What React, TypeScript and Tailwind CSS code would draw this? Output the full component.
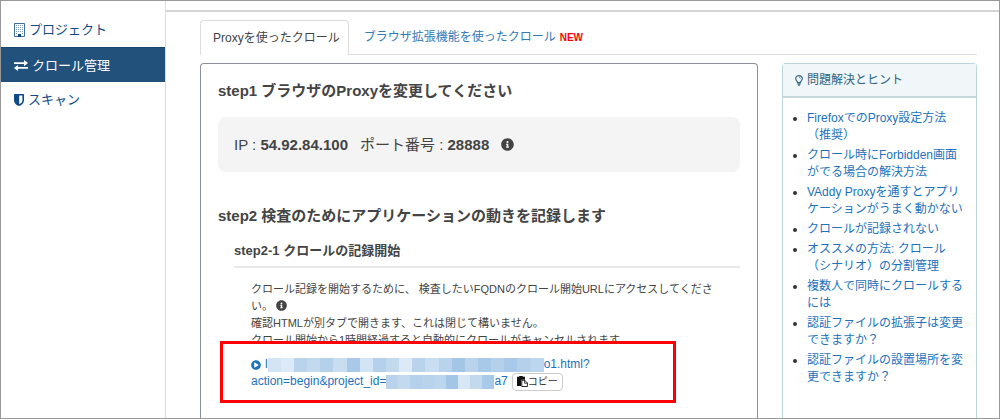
import type { ReactNode } from "react";
import { FaInfoCircle, FaPlayCircle } from "react-icons/fa";

const HINTS = [
  "FirefoxでのProxy設定方法（推奨）",
  "クロール時にForbidden画面がでる場合の解決方法",
  "VAddy Proxyを通すとアプリケーションがうまく動かない",
  "クロールが記録されない",
  "オススメの方法: クロール（シナリオ）の分割管理",
  "複数人で同時にクロールするには",
  "認証ファイルの拡張子は変更できますか？",
  "認証ファイルの設置場所を変更できますか？",
];

const MASK_HOST = [
  "bg-[#d3e4f4]",
  "bg-[#dce9f6]",
  "bg-[#b9d3ec]",
  "bg-[#c3d9ee]",
  "bg-[#b4d0ea]",
  "bg-[#c9ddf0]",
  "bg-[#a9c9e8]",
  "bg-[#d3e4f4]",
  "bg-[#b4d0ea]",
  "bg-[#c3d9ee]",
  "bg-[#dce9f6]",
  "bg-[#b9d3ec]",
  "bg-[#c9ddf0]",
  "bg-[#b9d3ec]",
  "bg-[#a3c6e6]",
  "bg-[#b9d3ec]",
  "bg-[#a9c9e8]",
  "bg-[#b4d0ea]",
  "bg-[#a9c9e8]",
  "bg-[#b4d0ea]",
  "bg-[#bcd6ed]",
];

const MASK_PROJECT = [
  "bg-[#b9d3ec]",
  "bg-[#c3d9ee]",
  "bg-[#b4d0ea]",
  "bg-[#b9d3ec]",
  "bg-[#bcd6ed]",
  "bg-[#a3c6e6]",
  "bg-[#d8e7f5]",
  "bg-[#c3d9ee]",
  "bg-[#a9c9e8]",
];

function BuildingIcon() {
  return (
    <svg className="h-[14px] w-[11px]" viewBox="0 0 11 14" fill="none" aria-hidden="true">
      <path d="M.5.5h10v13H.5z" stroke="currentColor" opacity=".8" />
      <path
        d="M2 2.5h1M4 2.5h1M6 2.5h1M8 2.5h1M2 4.5h1M4 4.5h1M6 4.5h1M8 4.5h1M2 6.5h1M4 6.5h1M6 6.5h1M8 6.5h1M2 8.5h1M4 8.5h1M6 8.5h1M8 8.5h1M2 10.5h1M8 10.5h1"
        stroke="currentColor"
        opacity=".55"
      />
      <path d="M4 11h3v3H4z" fill="currentColor" />
    </svg>
  );
}

function ExchangeIcon() {
  return (
    <svg className="h-[11px] w-[14px]" viewBox="0 0 14 11" fill="currentColor" aria-hidden="true">
      <path d="M0 2.2h10V0l4 3.1-4 3.1V4H0zM14 7H4V4.9L0 8l4 3V8.8h10z" />
    </svg>
  );
}

function ShieldIcon() {
  return (
    <svg className="h-[12px] w-[10px]" viewBox="0 0 10 12" aria-hidden="true">
      <path
        fillRule="evenodd"
        fill="currentColor"
        d="M.6 0h8.8q.6 0 .6.6v5.8C10 9 7.6 11 5 12 2.4 11 0 9 0 6.4V.6Q0 0 .6 0zM5.2 1.5v8.6c1.8-.9 3.2-2 3.2-3.7V1.5z"
      />
    </svg>
  );
}

function BulbIcon() {
  return (
    <svg className="h-[11px] w-[8px]" viewBox="0 0 8 11" fill="none" stroke="currentColor" aria-hidden="true">
      <path d="M2.5 7.500C2.500 6 .7 5.500.7 3.600a3.300 3 0 0 1 6.600 0C7.300 5.500 5.500 6 5.500 7.500z" strokeWidth="1.1" />
      <path d="M2.300 8.900h3.400M3 10.300h2" strokeWidth="1.1" />
      <path d="M4 2.300q1.300 0 1.500 1.200" strokeWidth=".7" />
    </svg>
  );
}

function PasteIcon() {
  return (
    <svg className="h-[11px] w-[11px]" viewBox="0 0 11 11" aria-hidden="true">
      <path d="M0 .8h2.200V0h3.600v.8H8v3H4.200V10H0z" fill="#111" />
      <path d="M4.800 4.300h3L10.400 7v3.500H4.800z" fill="#fff" stroke="#111" strokeWidth=".9" />
      <path d="M7.600 4.300v2.900h2.800" fill="none" stroke="#111" strokeWidth=".8" />
    </svg>
  );
}

function NavItem({ icon, label, active = false }: { icon: ReactNode; label: string; active?: boolean }) {
  return (
    <li>
      <a
        href="#"
        className={`flex h-[35px] items-center gap-1 pl-[13px] text-[13px] ${
          active ? "border-t border-[#174672] bg-[#22527b] text-white" : "text-[#0f4a87]"
        }`}
      >
        {icon}
        {label}
      </a>
    </li>
  );
}

function Mask({ cells, width }: { cells: string[]; width: string }) {
  return (
    <span className={`inline-flex h-[14px] align-middle ${width}`} aria-hidden="true">
      {cells.map((color, i) => (
        <span key={i} className={`flex-1 ${color}`} />
      ))}
    </span>
  );
}

export default function App() {
  return (
    <div className="flex h-screen overflow-hidden border border-[#999] bg-white font-['Liberation_Sans','Noto_Sans_CJK_JP',sans-serif] text-[12px] leading-[17px] text-[#444]">
      <nav className="w-[165px] shrink-0 border-r border-[#ddd] pt-[11px]">
        <ul>
          <NavItem icon={<BuildingIcon />} label="プロジェクト" />
          <NavItem icon={<ExchangeIcon />} label="クロール管理" active />
          <NavItem icon={<ShieldIcon />} label="スキャン" />
        </ul>
      </nav>

      <main className="flex min-w-0 flex-1 flex-col pt-[9px]">
        <div className="border-t-2 border-[#d5d5d5] pt-2" />

        <div className="flex min-h-0 flex-1 flex-col pr-[22px] pl-[34px]">
          {/* Tabs */}
          <div className="flex border-b border-[#ddd]">
            <button
              type="button"
              className="-mb-px h-[35px] rounded-t border border-b-0 border-[#ddd] bg-white pr-2 pl-3"
            >
              Proxyを使ったクロール
            </button>
            <button type="button" className="flex h-[34px] items-center gap-1 px-[15px] text-[#337ab7]">
              ブラウザ拡張機能を使ったクロール
              <span className="text-[10px] font-bold text-[#f00]">NEW</span>
            </button>
          </div>

          <div className="mt-2 flex min-h-0 flex-1 gap-6">
            <section className="min-w-0 flex-1 rounded-t border border-b-0 border-[#8b9197] px-[17px] pt-4">
              <h2 className="text-[15px] leading-[22px] font-bold">step1 ブラウザのProxyを変更してください</h2>

              <div className="mt-[15px] flex h-[55px] items-center rounded-lg bg-[#f4f4f4] px-4 text-[15px]">
                <span>
                  IP : <b>54.92.84.100</b>
                </span>
                <span className="ml-3">
                  ポート番号 : <b>28888</b>
                </span>
                <FaInfoCircle className="ml-3 h-[13px] w-[13px]" />
              </div>

              <h2 className="mt-[33px] text-[15px] leading-[22px] font-bold">
                step2 検査のためにアプリケーションの動きを記録します
              </h2>

              <div className="pl-4">
                <h3 className="mt-[15px] border-b-2 border-[#e9e9e9] pb-[6px] text-[13px] leading-[18px] font-bold">
                  step2-1 クロールの記録開始
                </h3>

                <div className="pt-[13px] pl-[17px]">
                  <p className="text-[11px]">
                    クロール記録を開始するために、 検査したいFQDNのクロール開始URLにアクセスしてくださ
                    <br />
                    い。 <FaInfoCircle className="inline h-[11px] w-[11px] align-[-1px]" />
                    <br />
                    確認HTMLが別タブで開きます、これは閉じて構いません。
                    <br />
                    クロール開始から1時間経過すると自動的にクロールがキャンセルされます。
                  </p>

                  {/* Highlighted start URL, overlaps the line above */}
                  <div className="relative -mt-2 -ml-[31px] w-[456px] max-w-full border-[3px] border-[#f00] bg-white pt-3 pb-[10px] pl-7">
                    <div className="flex items-center whitespace-nowrap text-[#1c72bd]">
                      <FaPlayCircle className="mr-1 h-[10px] w-[10px]" />
                      <a href="#">
                        l<Mask cells={MASK_HOST} width="w-[276px]" />
                        o1.html?
                      </a>
                    </div>
                    <div className="flex h-[17px] items-center whitespace-nowrap text-[#1c72bd]">
                      <a href="#">
                        action=begin&amp;project_id=
                        <Mask cells={MASK_PROJECT} width="w-[108px]" />
                        a7
                      </a>
                      <button
                        type="button"
                        className="ml-1 flex h-[18px] items-center rounded-sm border border-[#ccc] px-1 text-[10px] text-[#333]"
                      >
                        <PasteIcon />
                        コピー
                      </button>
                    </div>
                  </div>
                </div>
              </div>
            </section>

            <aside className="w-[195px] shrink-0 rounded-t border border-b-0 border-[#bcd5db]">
              <h3 className="flex h-[34px] items-center gap-1 border-b-2 border-[#c8dade] bg-[#f1f6f9] pl-3 text-[#2f6580]">
                <BulbIcon />
                問題解決とヒント
              </h3>
              <ul className="list-disc space-y-[3px] pt-3 pr-[11px] pl-6 marker:text-[#333]">
                {HINTS.map((hint) => (
                  <li key={hint}>
                    <a href="#" className="text-[#1c72bd]">
                      {hint}
                    </a>
                  </li>
                ))}
              </ul>
            </aside>
          </div>
        </div>
      </main>
    </div>
  );
}
